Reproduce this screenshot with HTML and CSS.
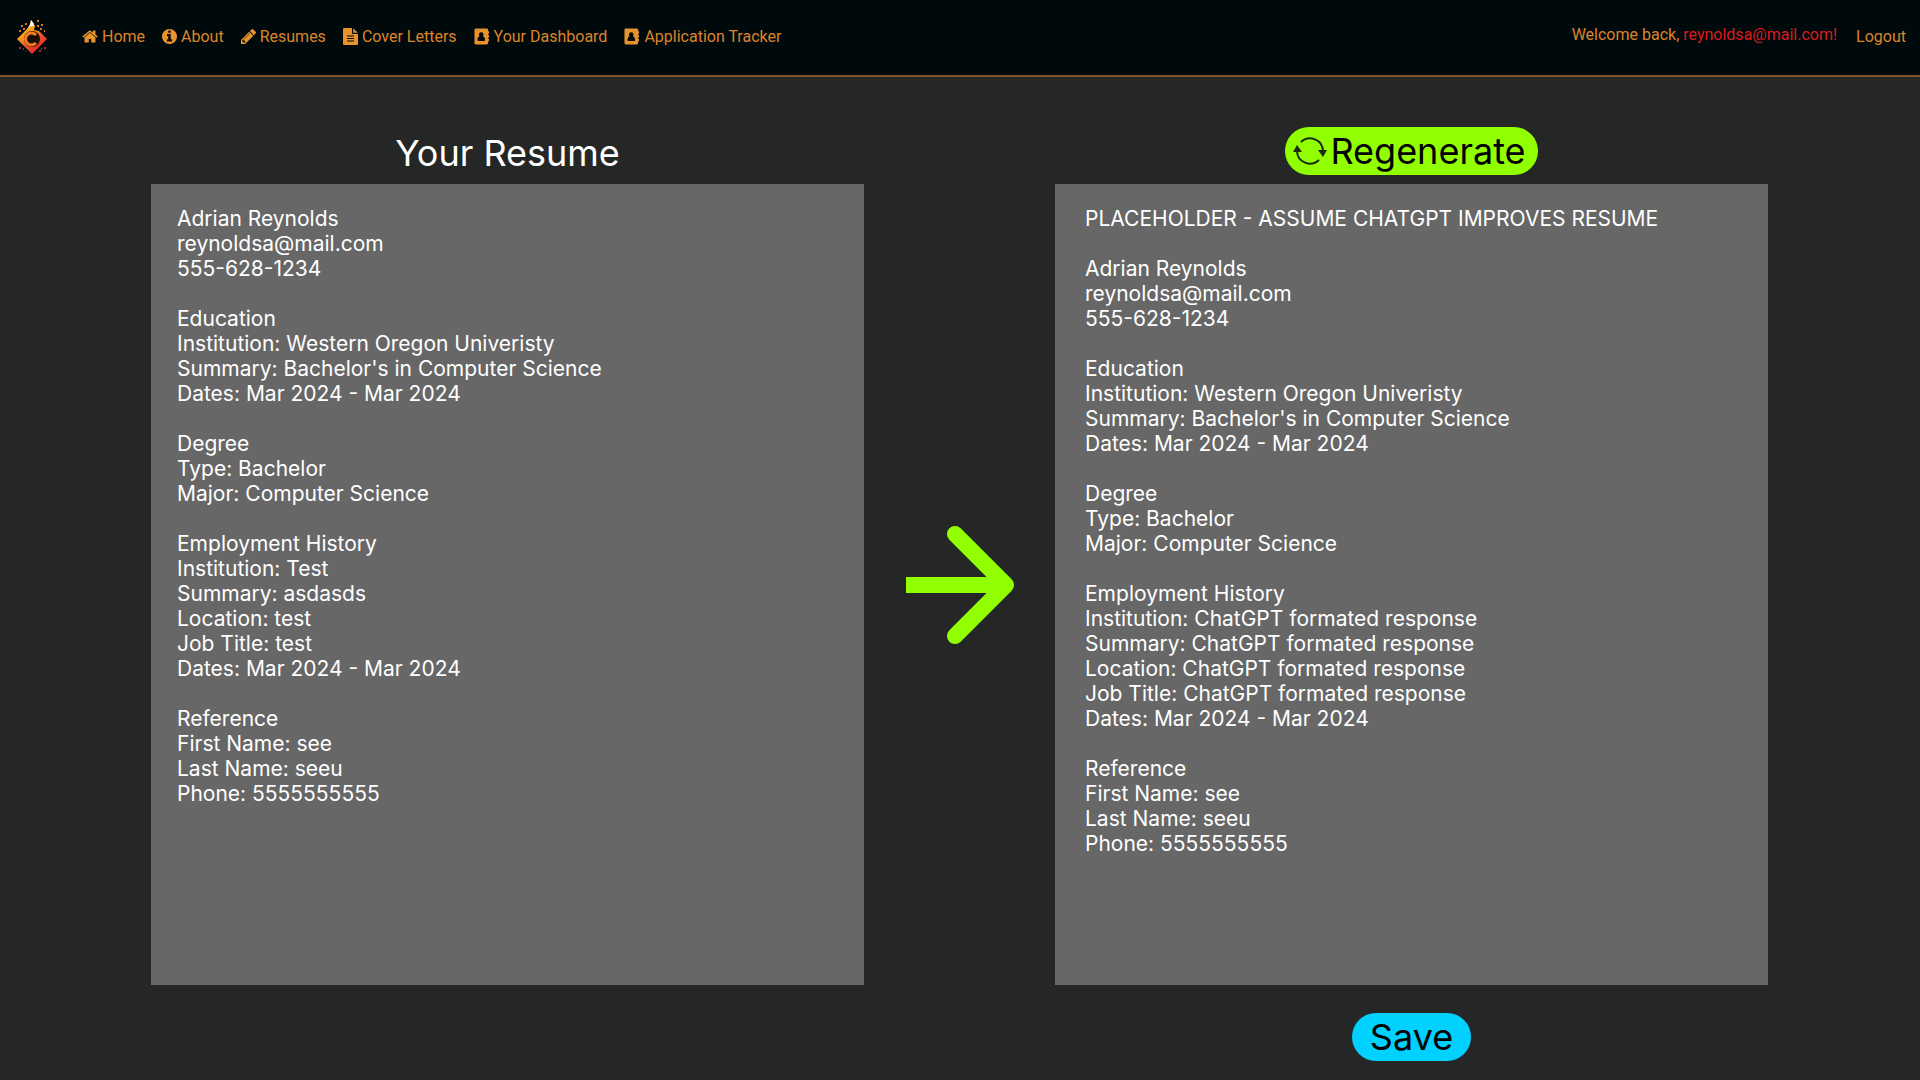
FILE: index.html
```html
<!DOCTYPE html>
<html lang="en">
<head>
<meta charset="utf-8">
<meta name="viewport" content="width=device-width, initial-scale=1">
<title>Your Resume</title>
<link rel="stylesheet" href="styles.css">
</head>
<body>
<svg class="sprite" aria-hidden="true">
  <symbol id="address-book" viewBox="0 0 17 17">
    <path fill-rule="evenodd" d="M2 0h11.500q1.500 0 1.500 1.500V3h.7q.3 0 .3.300v1.900q0 .300-.3.300H15V7h.7q.3 0 .3.300v1.900q0 .300-.3.300H15V11h.7q.3 0 .3.300v1.900q0 .300-.3.300H15v2q0 1.500-1.500 1.500H2Q.5 17 .5 15.500v-14Q.500 0 2 0zM7.700 4Q5.300 4 5.300 6.600q0 1.200.6 2Q3.700 9 3.700 12.300q0 1 1 1h6q1 0 1-1 0-3.300-2.200-3.700.6-.8.6-2Q10.100 4 7.700 4z"/>
  </symbol>
</svg>
<header class="topbar">
  <a class="logo" href="#" aria-label="Home page">
    <svg viewBox="0 0 30 35" width="30" height="35" aria-hidden="true">
      <defs>
        <linearGradient id="flame" x1="0" y1="0" x2=".6" y2="1">
          <stop offset="0" stop-color="#ffd23c"/>
          <stop offset=".45" stop-color="#f99a1c"/>
          <stop offset=".7" stop-color="#f0522a"/>
          <stop offset="1" stop-color="#e0202a"/>
        </linearGradient>
      </defs>
      <path fill="url(#flame)" d="M0 20 9 11Q13 7 14 1q3 3 4 6l-1 4 5 1 8 8-15 15z"/>
      <path fill="#fff" d="M10 10q4-4 4-9 3 3 3 6-3-1-7 3z"/>
      <circle cx="15" cy="20" r="8" fill="#1a0d08"/>
      <path fill="none" stroke="#f47a24" stroke-width="3" d="M19 16a6 6 0 1 0 0 8"/>
      <path fill="#d9771e" d="M4 6h2v2H4zM8 4h2v2H8zM2 11h2v2H2zM6 9h2v2H6zM20 1h2v2h-2zM24 5h2v2h-2zM20 6h2v2h-2zM23 9h2v2h-2zM27 11h1v2h-1z"/>
      <path fill="#b02320" d="M2 28h2v2H2zM6 29h1v2H6zM24 29h1v2h-1zM27 28h2v2h-2zM22 31h2v2h-2zM8 32h1v1H8z"/>
    </svg>
  </a>
  <nav class="nav" aria-label="Main">
    <a href="#"><svg viewBox="60 0 1676 1792" width="16" height="17" aria-hidden="true"><path d="M1472 992v480q0 26-19 45t-45 19h-384v-384h-256v384h-384q-26 0-45-19t-19-45v-480q0-1 .5-3t.5-3l575-474 575 474q1 2 1 6zm223-69l-62 74q-8 9-21 11h-3q-13 0-21-7l-692-577-692 577q-12 8-24 7-13-2-21-11l-62-74q-8-10-7-23.500t11-21.500l719-599q32-26 76-26t76 26l244 204v-195q0-14 9-23t23-9h192q14 0 23 9t9 23v408l219 182q10 8 11 21.500t-7 23.500z"/></svg>Home</a>
    <a href="#"><svg viewBox="128 128 1536 1536" width="15" height="15" aria-hidden="true"><path d="M1152 1376v-160q0-14-9-23t-23-9h-96v-512q0-14-9-23t-23-9h-320q-14 0-23 9t-9 23v160q0 14 9 23t23 9h96v320h-96q-14 0-23 9t-9 23v160q0 14 9 23t23 9h448q14 0 23-9t9-23zm-128-896v-160q0-14-9-23t-23-9h-192q-14 0-23 9t-9 23v160q0 14 9 23t23 9h192q14 0 23-9t9-23zm640 416q0 209-103 385.500t-279.500 279.500-385.500 103-385.500-103-279.500-279.500-103-385.500 103-385.500 279.500-279.500 385.500-103 385.500 103 279.500 279.500 103 385.500z"/></svg>About</a>
    <a href="#"><svg viewBox="128 149 1515 1515" width="15" height="15" aria-hidden="true"><path d="M491 1536l91-91-235-235-91 91v107h128v128h107zm523-928q0-22-22-22-10 0-17 7l-542 542q-7 7-7 17 0 22 22 22 10 0 17-7l542-542q7-7 7-17zm-54-192l416 416-832 832h-416v-416zm683 96q0 53-37 90l-166 166-416-416 166-165q36-38 90-38 53 0 91 38l235 234q37 39 37 91z"/></svg>Resumes</a>
    <a href="#"><svg viewBox="0 0 15 17" width="15" height="17" aria-hidden="true"><path fill-rule="evenodd" d="M1 0h8v5q0 1 1 1h5v10q0 1-1 1H1q-1 0-1-1V1q0-1 1-1zM4 7.500v1h7v-1zM4 10v1h7v-1zM4 12.500v1h7v-1zM10.200.2 14.800 4.800h-4.600z"/></svg>Cover Letters</a>
    <a href="#"><svg width="16" height="17" aria-hidden="true"><use href="#address-book"/></svg>Your Dashboard</a>
    <a href="#"><svg width="16" height="17" aria-hidden="true"><use href="#address-book"/></svg>Application Tracker</a>
  </nav>
  <p class="welcome">Welcome back, <span class="user">reynoldsa@mail.com!</span></p>
  <a class="logout" href="#">Logout</a>
</header>
<main class="compare">
  <h1 class="title">Your Resume</h1>
  <button class="pill regenerate" type="button">
    <svg viewBox="0 0 36 30" width="36" height="30" aria-hidden="true">
      <path fill="none" stroke="#1c2a10" stroke-width="2" d="M9 6A13 13 0 0 1 31 15M27 24A13 13 0 0 1 5 15"/>
      <path fill="#1c2a10" d="M26 14h9L31 21zM1 16h9L5 9z"/>
    </svg>Regenerate</button>
  <article class="resume original" aria-label="Your resume">
    <p>Adrian Reynolds<br>reynoldsa@mail.com<br>555-628-1234</p>
    <p>Education<br>Institution: Western Oregon Univeristy<br>Summary: Bachelor's in Computer Science<br>Dates: Mar 2024 - Mar 2024</p>
    <p>Degree<br>Type: Bachelor<br>Major: Computer Science</p>
    <p>Employment History<br>Institution: Test<br>Summary: asdasds<br>Location: test<br>Job Title: test<br>Dates: Mar 2024 - Mar 2024</p>
    <p>Reference<br>First Name: see<br>Last Name: seeu<br>Phone: 5555555555</p>
  </article>
  <svg class="arrow" viewBox="0 0 108 118" width="108" height="118" aria-hidden="true">
    <path fill="none" stroke="#91ff00" stroke-width="16" d="M0 59h100"/>
    <path fill="none" stroke="#91ff00" stroke-width="16" stroke-linecap="round" stroke-linejoin="round" d="M49 8l51 51-51 51"/>
  </svg>
  <article class="resume improved" aria-label="Improved resume">
    <p>PLACEHOLDER - ASSUME CHATGPT IMPROVES RESUME</p>
    <p>Adrian Reynolds<br>reynoldsa@mail.com<br>555-628-1234</p>
    <p>Education<br>Institution: Western Oregon Univeristy<br>Summary: Bachelor's in Computer Science<br>Dates: Mar 2024 - Mar 2024</p>
    <p>Degree<br>Type: Bachelor<br>Major: Computer Science</p>
    <p>Employment History<br>Institution: ChatGPT formated response<br>Summary: ChatGPT formated response<br>Location: ChatGPT formated response<br>Job Title: ChatGPT formated response<br>Dates: Mar 2024 - Mar 2024</p>
    <p>Reference<br>First Name: see<br>Last Name: seeu<br>Phone: 5555555555</p>
  </article>
  <button class="pill save" type="button">Save</button>
</main>
</body>
</html>
```
FILE: styles.css
```css
* {
  box-sizing: border-box;
}

body {
  margin: 0;
  background: #252726;
  color: #fff;
  font-family: Inter, "Liberation Sans", sans-serif;
}

h1,
p {
  margin: 0;
}

.sprite {
  display: none;
}

.topbar {
  display: flex;
  align-items: center;
  height: 77px;
  padding: 0 14px 2px 17px;
  background: #000a0c;
  border-bottom: 2px solid #7e5226;
  color: #dc8428;
  font: 400 16px/24px Roboto, "Liberation Sans", sans-serif;
}

.topbar a {
  color: inherit;
  text-decoration: none;
}

.logo {
  display: flex;
}

.nav {
  display: flex;
  gap: 17px;
  flex: 1;
  margin-left: 35px;
}

.nav a {
  display: flex;
  align-items: center;
  gap: 4px;
}

.nav svg {
  fill: #e8922e;
}

.welcome {
  padding-bottom: 4px;
}

.user {
  color: #dc1a1c;
}

.logout {
  margin-left: 19px;
}

.compare {
  display: grid;
  grid-template-columns: 1fr 191px 1fr;
  justify-items: center;
  padding: 50px 152px 19px 151px;
}

.title {
  grid-column: 1;
  align-self: end;
  margin-bottom: 9px;
  font-size: 36px;
  line-height: 44px;
  font-weight: 400;
}

.pill {
  display: flex;
  align-items: center;
  height: 48px;
  padding: 0 18px;
  border: 0;
  border-radius: 24px;
  color: #000;
  font: 400 36px/44px Inter, "Liberation Sans", sans-serif;
  cursor: pointer;
}

.regenerate {
  grid-column: 3;
  gap: 2px;
  margin-bottom: 9px;
  padding: 0 12px 0 7px;
  background: #91ff00;
}

.save {
  grid-column: 3;
  margin-top: 28px;
  background: #00d1ff;
}

.resume {
  display: flex;
  flex-direction: column;
  gap: 25px;
  justify-self: stretch;
  min-height: 801px;
  padding: 22px 26px;
  background: #676767;
  font-size: 21px;
  line-height: 25px;
}

.improved {
  padding-left: 30px;
}

.arrow {
  align-self: center;
}
```
